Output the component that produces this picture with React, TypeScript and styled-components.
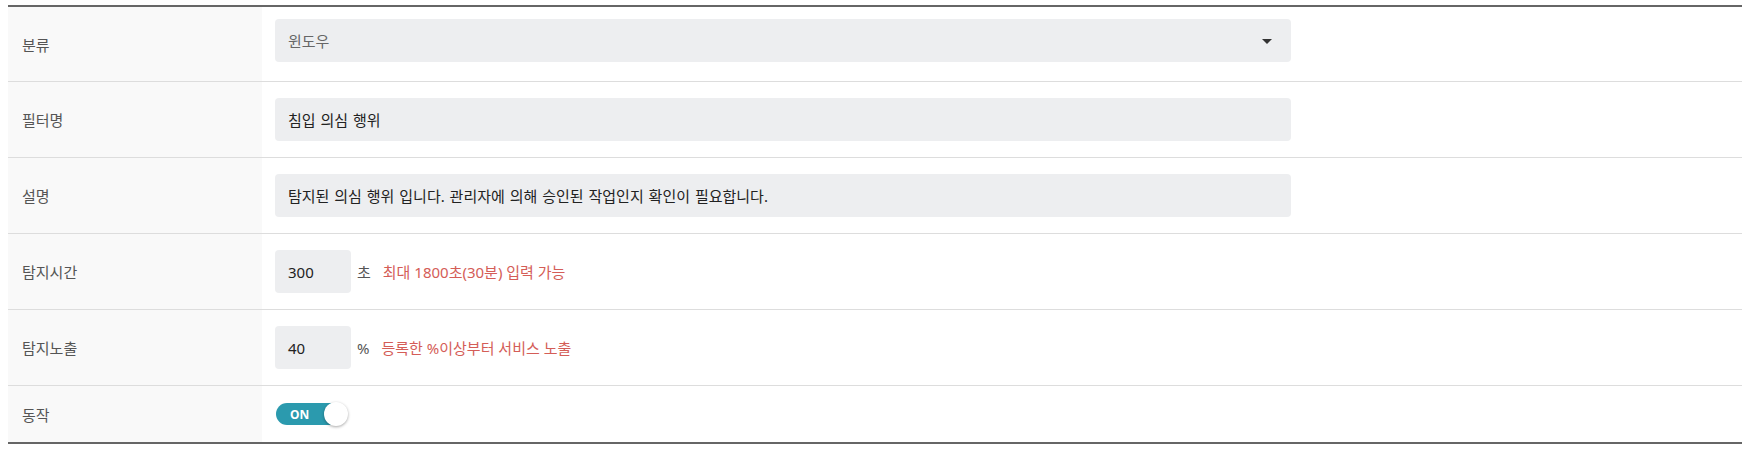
import React from "react";
import styled, { createGlobalStyle } from "styled-components";

const Global = createGlobalStyle`
  html, body { margin: 0; padding: 0; background: #fff; }
  body { font-family: "Noto Sans", "Noto Sans CJK KR", sans-serif; }
  * { box-sizing: border-box; }
`;

const Page = styled.div`
  padding: 5px 0 0 8px;
`;

const Table = styled.div`
  border-top: 2px solid #666;
  border-bottom: 2px solid #666;
  width: 100%;
`;

const Row = styled.div<{ $last?: boolean }>`
  display: grid;
  grid-template-columns: 254px 1fr;
  border-bottom: ${(p) => (p.$last ? "none" : "1px solid #dddddd")};
`;

const Label = styled.div`
  background: #f9f9f9;
  display: flex;
  align-items: center;
  padding-left: 14px;
  font-family: "Noto Sans CJK KR", "Noto Sans", sans-serif;
  font-size: 15px;
  color: #555;
`;

const Cell = styled.div<{ $pad: string }>`
  display: flex;
  align-items: center;
  padding: ${(p) => p.$pad};
  padding-left: 13px;
`;

const Field = styled.div<{ $width?: number; $muted?: boolean }>`
  width: ${(p) => (p.$width ? `${p.$width}px` : "1016px")};
  height: 43px;
  border-radius: 4px;
  background: #edeef0;
  display: flex;
  align-items: center;
  justify-content: space-between;
  padding: 0 19px 0 13px;
  font-family: "Noto Sans", "Noto Sans CJK KR", sans-serif;
  font-size: 15px;
  word-spacing: 1px;
  color: ${(p) => (p.$muted ? "#666" : "#222")};
  flex-shrink: 0;
`;

const Caret = styled.span`
  width: 0;
  height: 0;
  border-left: 5px solid transparent;
  border-right: 5px solid transparent;
  border-top: 5px solid #333;
  margin-top: 2px;
`;

const Unit = styled.span`
  font-family: "Noto Sans", "Noto Sans CJK KR", sans-serif;
  font-size: 15px;
  color: #555;
  margin-left: 6px;
`;

const Hint = styled.span`
  font-family: "Noto Sans", "Noto Sans CJK KR", sans-serif;
  font-size: 15px;
  color: #d45d57;
  margin-left: 12px;
`;

const Toggle = styled.div`
  position: relative;
  width: 67px;
  height: 22px;
  border-radius: 11px;
  background: #2b9aae;
  display: flex;
  align-items: center;
  padding-left: 14px;
  margin-left: 1px;
`;

const ToggleText = styled.span`
  font-family: "Noto Sans", sans-serif;
  font-weight: 700;
  font-size: 12px;
  color: #fff;
`;

const Knob = styled.span`
  position: absolute;
  right: -5px;
  top: -1px;
  width: 24px;
  height: 24px;
  border-radius: 50%;
  background: #fff;
  box-shadow: 0 1px 3px rgba(0, 0, 0, 0.35);
`;

export default function App() {
  return (
    <>
      <Global />
      <Page>
        <Table>
          <Row>
            <Label>분류</Label>
            <Cell $pad="12px 0 19px">
              <Field $muted>
                <span>윈도우</span>
                <Caret />
              </Field>
            </Cell>
          </Row>
          <Row>
            <Label>필터명</Label>
            <Cell $pad="16px 0">
              <Field>침입 의심 행위</Field>
            </Cell>
          </Row>
          <Row>
            <Label>설명</Label>
            <Cell $pad="16px 0">
              <Field>탐지된 의심 행위 입니다. 관리자에 의해 승인된 작업인지 확인이 필요합니다.</Field>
            </Cell>
          </Row>
          <Row>
            <Label>탐지시간</Label>
            <Cell $pad="16px 0">
              <Field $width={76}>300</Field>
              <Unit>초</Unit>
              <Hint>최대 1800초(30분) 입력 가능</Hint>
            </Cell>
          </Row>
          <Row>
            <Label>탐지노출</Label>
            <Cell $pad="16px 0">
              <Field $width={76}>40</Field>
              <Unit>%</Unit>
              <Hint>등록한 %이상부터 서비스 노출</Hint>
            </Cell>
          </Row>
          <Row $last>
            <Label>동작</Label>
            <Cell $pad="17px 0">
              <Toggle>
                <ToggleText>ON</ToggleText>
                <Knob />
              </Toggle>
            </Cell>
          </Row>
        </Table>
      </Page>
    </>
  );
}
